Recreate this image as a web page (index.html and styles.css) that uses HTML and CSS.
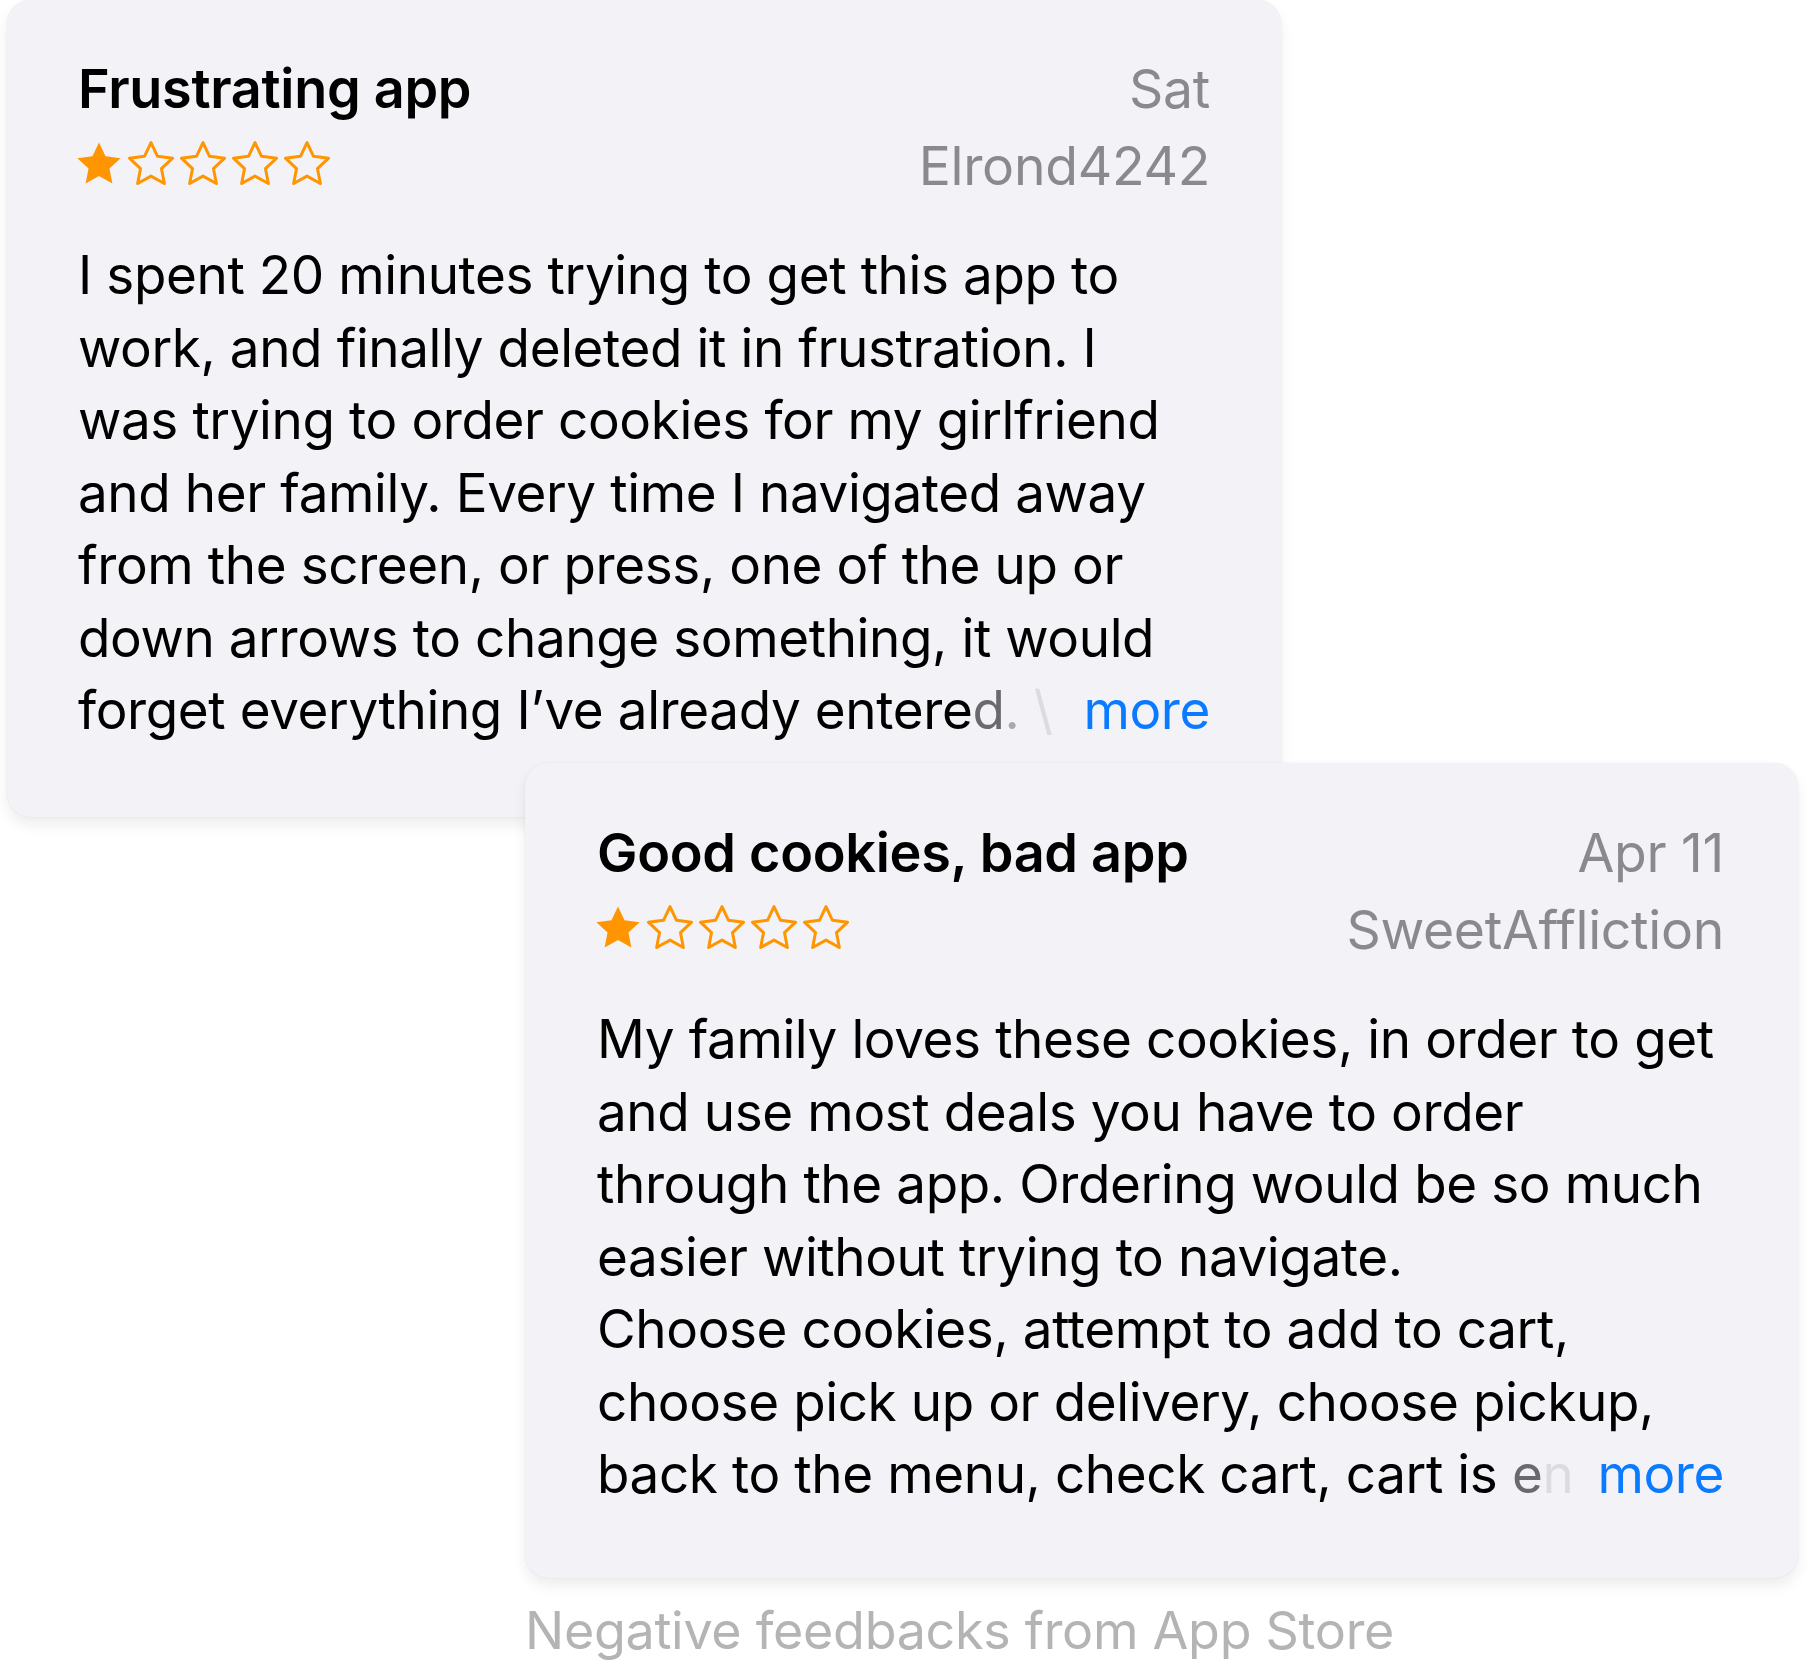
FILE: index.html
```html
<!DOCTYPE html>
<html lang="en">
<head>
<meta charset="utf-8">
<title>Negative feedbacks from App Store</title>
<link rel="stylesheet" href="styles.css">
</head>
<body>
<main class="canvas">
  <article class="review review-first">
    <div class="head-row">
      <h2 class="title">Frustrating app</h2>
      <span class="meta">Sat</span>
    </div>
    <div class="head-row second-row">
      <div class="stars">
        <svg class="star" viewBox="1.5 1.5 21 21"><path class="full" d="M12 2.6l2.85 6.05 6.6.8-4.88 4.55 1.28 6.55L12 17.3l-5.850 3.25 1.28-6.55L2.55 9.45l6.6-.8z"/></svg>
        <svg class="star" viewBox="1.5 1.5 21 21"><path class="empty" d="M12 2.6l2.85 6.05 6.6.8-4.88 4.55 1.28 6.55L12 17.3l-5.85 3.25 1.28-6.55L2.55 9.45l6.6-.8z"/></svg>
        <svg class="star" viewBox="1.5 1.5 21 21"><path class="empty" d="M12 2.6l2.85 6.05 6.6.8-4.88 4.55 1.28 6.55L12 17.3l-5.85 3.25 1.28-6.55L2.55 9.45l6.6-.8z"/></svg>
        <svg class="star" viewBox="1.5 1.5 21 21"><path class="empty" d="M12 2.6l2.85 6.05 6.6.8-4.88 4.55 1.28 6.55L12 17.3l-5.85 3.25 1.28-6.55L2.55 9.45l6.6-.8z"/></svg>
        <svg class="star" viewBox="1.5 1.5 21 21"><path class="empty" d="M12 2.6l2.85 6.05 6.6.8-4.88 4.55 1.28 6.55L12 17.3l-5.85 3.25 1.28-6.55L2.55 9.45l6.6-.8z"/></svg>
      </div>
      <span class="meta">Elrond4242</span>
    </div>
    <div class="body">
      <div class="line">I spent 20 minutes trying to get this app to</div>
      <div class="line">work, and finally deleted it in frustration. I</div>
      <div class="line">was trying to order cookies for my girlfriend</div>
      <div class="line">and her family. Every time I navigated away</div>
      <div class="line">from the screen, or press, one of the up or</div>
      <div class="line">down arrows to change something, it would</div>
      <div class="line last">
        <span class="clip">forget everything I’ve already entere<span class="f1">d</span><span class="f2">.</span> <span class="f3">\</span></span>
        <span class="more">more</span>
      </div>
    </div>
  </article>

  <article class="review review-second">
    <div class="head-row">
      <h2 class="title">Good cookies, bad app</h2>
      <span class="meta">Apr 11</span>
    </div>
    <div class="head-row second-row">
      <div class="stars">
        <svg class="star" viewBox="1.5 1.5 21 21"><path class="full" d="M12 2.6l2.85 6.05 6.6.8-4.88 4.55 1.28 6.55L12 17.3l-5.85 3.25 1.28-6.55L2.55 9.45l6.6-.8z"/></svg>
        <svg class="star" viewBox="1.5 1.5 21 21"><path class="empty" d="M12 2.6l2.85 6.05 6.6.8-4.88 4.55 1.28 6.55L12 17.3l-5.85 3.25 1.28-6.55L2.55 9.45l6.6-.8z"/></svg>
        <svg class="star" viewBox="1.5 1.5 21 21"><path class="empty" d="M12 2.6l2.85 6.05 6.6.8-4.88 4.55 1.28 6.55L12 17.3l-5.85 3.25 1.28-6.55L2.55 9.45l6.6-.8z"/></svg>
        <svg class="star" viewBox="1.5 1.5 21 21"><path class="empty" d="M12 2.6l2.85 6.05 6.6.8-4.88 4.55 1.28 6.55L12 17.3l-5.85 3.25 1.28-6.55L2.55 9.45l6.6-.8z"/></svg>
        <svg class="star" viewBox="1.5 1.5 21 21"><path class="empty" d="M12 2.6l2.85 6.05 6.6.8-4.88 4.55 1.28 6.55L12 17.3l-5.85 3.25 1.28-6.55L2.55 9.45l6.6-.8z"/></svg>
      </div>
      <span class="meta">SweetAffliction</span>
    </div>
    <div class="body">
      <div class="line">My family loves these cookies, in order to get</div>
      <div class="line">and use most deals you have to order</div>
      <div class="line">through the app. Ordering would be so much</div>
      <div class="line">easier without trying to navigate.</div>
      <div class="line">Choose cookies, attempt to add to cart,</div>
      <div class="line">choose pick up or delivery, choose pickup,</div>
      <div class="line last">
        <span class="clip">back to the menu, check cart, cart is <span class="f1">e</span><span class="f3">n</span></span>
        <span class="more">more</span>
      </div>
    </div>
  </article>

  <p class="caption">Negative feedbacks from App Store</p>
</main>
</body>
</html>
```

FILE: styles.css
```css
* {
  box-sizing: border-box;
}

html,
body {
  margin: 0;
  padding: 0;
  background: #ffffff;
}

body {
  font-family: Inter, "Noto Sans", "Liberation Sans", sans-serif;
  color: #000000;
  width: 1808px;
  height: 1663px;
  overflow: hidden;
}

.canvas {
  display: grid;
  grid-template-columns: 7px 518px 756px 517px;
  grid-template-rows: 763px 54px 761px auto;
}

.review {
  background: #f2f2f7;
  border-radius: 24px;
  box-shadow: 0 8px 14px rgba(0, 0, 0, 0.07), 0 0 2px rgba(0, 0, 0, 0.08);
  display: flex;
  flex-direction: column;
}

.review-first {
  grid-column: 2 / 4;
  grid-row: 1 / 3;
  padding: 55px 71px 0 71px;
}

.review-second {
  grid-column: 3 / 5;
  grid-row: 2 / 4;
  padding: 56px 74px 0 72px;
  position: relative;
  z-index: 1;
}

.head-row {
  display: flex;
  justify-content: space-between;
  align-items: center;
  height: 68px;
}

.second-row {
  margin-top: 9px;
}

.title {
  margin: 0;
  font-size: 54px;
  font-weight: 600;
  letter-spacing: -0.3px;
  line-height: 68px;
}

.meta {
  font-size: 53.5px;
  color: #8a8a8e;
  line-height: 68px;
  letter-spacing: -0.3px;
}

.stars {
  display: flex;
  gap: 4px;
  margin-left: -3px;
  margin-top: -4px;
}

.star {
  width: 48px;
  height: 48px;
  display: block;
}

.star .full {
  fill: #ff9500;
}

.star .empty {
  fill: none;
  stroke: #ff9500;
  stroke-width: 1.3;
  stroke-linejoin: round;
}

.body {
  margin-top: 39px;
  font-size: 53px;
  line-height: 72.5px;
  letter-spacing: -0.4px;
}

.line {
  white-space: nowrap;
}

.line.last {
  display: flex;
  justify-content: space-between;
}

.f1 {
  color: #6a6a6e;
}

.f2 {
  color: #a9a9ad;
}

.f3 {
  color: #dcdce0;
}

.more {
  color: #0a7aff;
}

.caption {
  grid-column: 3 / 5;
  grid-row: 4;
  margin: 21px 0 0 0;
  font-size: 52px;
  line-height: 64px;
  color: #b4b4b4;
  letter-spacing: -0.3px;
}
```
